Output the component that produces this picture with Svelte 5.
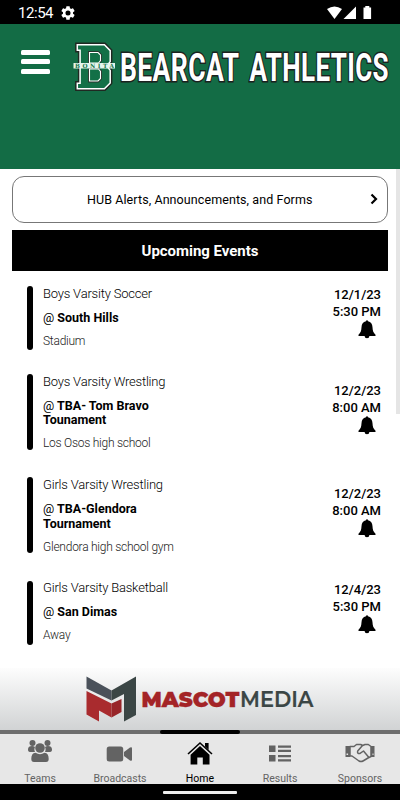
<script>
  const events = [
    { sport: 'Boys Varsity Soccer', opponent: ['South Hills'], venue: 'Stadium', date: '12/1/23', time: '5:30 PM' },
    { sport: 'Boys Varsity Wrestling', opponent: ['TBA- Tom Bravo', 'Tounament'], venue: 'Los Osos high school', date: '12/2/23', time: '8:00 AM' },
    { sport: 'Girls Varsity Wrestling', opponent: ['TBA-Glendora', 'Tournament'], venue: 'Glendora high school gym', date: '12/2/23', time: '8:00 AM' },
    { sport: 'Girls Varsity Basketball', opponent: ['San Dimas'], venue: 'Away', date: '12/4/23', time: '5:30 PM' }
  ];
  const tabs = ['Teams', 'Broadcasts', 'Home', 'Results', 'Sponsors'];
</script>

<div class="phone">
  <div class="status">
    <span class="clock">12:54</span>
    <svg class="gear" width="14" height="14" viewBox="2 2 20 20"><path fill="#fff" d="M19.14 12.94c.04-.3.06-.61.06-.94 0-.32-.02-.64-.07-.94l2.03-1.58a.49.49 0 0 0 .12-.61l-1.92-3.32a.49.49 0 0 0-.59-.22l-2.39.96c-.5-.38-1.03-.7-1.62-.94l-.36-2.54a.48.48 0 0 0-.48-.41h-3.84a.47.47 0 0 0-.47.41l-.36 2.54c-.59.24-1.13.57-1.62.94l-2.39-.96a.48.48 0 0 0-.59.22L2.74 8.87a.48.48 0 0 0 .12.61l2.03 1.58c-.05.3-.09.63-.09.94s.02.64.07.94l-2.03 1.58a.49.49 0 0 0-.12.61l1.92 3.32c.12.22.37.29.59.22l2.39-.96c.5.38 1.03.7 1.62.94l.36 2.54c.05.24.24.41.48.41h3.84c.24 0 .44-.17.47-.41l.36-2.54c.59-.24 1.13-.56 1.62-.94l2.39.96c.22.08.47 0 .59-.22l1.92-3.32a.48.48 0 0 0-.12-.61zM12 15.6a3.6 3.6 0 1 1 0-7.2 3.6 3.6 0 0 1 0 7.2z"/></svg>
    <svg class="signals" width="46" height="14" viewBox="0 0 46 14"><g fill="#fff"><path d="M0 3Q7.500-2 15 3L7.500 13Z"/><path d="M29 .5V13H16.500Z"/><path d="M38.300 1.500V0h4v1.500h1.800V13h-7.600V1.500Z"/></g></svg>
  </div>

  <header>
    <button class="menu" aria-label="Menu"><i></i><i></i><i></i></button>
    <svg class="banner" width="328" height="60" viewBox="72 36 328 60">
      <g stroke-linejoin="miter">
        <path d="M76 43.500H105l6.500 6.500v12l-3.500 4 3.500 4v13.500l-6.500 6.500H76v-8h2.800V51.500H76Z" fill="#137047" stroke="#202822" stroke-width="1.800"/>
        <path d="M77.300 44.800H104.400l5.800 5.800v11l-3.500 4.400 3.500 4.400v12.600l-5.800 5.700H77.300v-5.400h2.800V50.200h-2.800Z" fill="none" stroke="#fff" stroke-width="1.500"/>
        <path d="M89.500 52.500h8.500l2.500 2.500v5.500L98.500 63h-9ZM89.500 69H98.500l2 2.500v7L98 81h-8.500Z" fill="#137047" stroke="#28342d" stroke-width="3"/>
        <path d="M89.500 52.500h8.500l2.500 2.500v5.500L98.500 63h-9ZM89.500 69H98.500l2 2.500v7L98 81h-8.500Z" fill="#137047" stroke="#fff" stroke-width="1.100"/>
      </g>
      <path d="M73.500 63h41.500v5.500H73.500Z" fill="#e6f5ed"/>
      <text x="75" y="67.900" font-size="5.800" font-family="DejaVu Serif, serif" font-weight="700" fill="#17764b" textLength="39" lengthAdjust="spacing">BONITA</text>
      <text transform="translate(120 80.500) scale(.7 1)" class="title" font-size="38" textLength="170" lengthAdjust="spacing">BEARCAT</text>
      <text transform="translate(249.500 80.500) scale(.685 1)" class="title" font-size="38" textLength="203" lengthAdjust="spacing">ATHLETICS</text>
    </svg>
  </header>

  <main>
    <div class="alert">
      <span>HUB Alerts, Announcements, and Forms</span>
      <svg width="8" height="12" viewBox="0 0 8 12"><path d="m1.500 1.500 4.500 4.500-4.500 4.500" fill="none" stroke="#000" stroke-width="2.200"/></svg>
    </div>
    <h2>Upcoming Events</h2>
    <ul>
      {#each events as e}
        <li class:tall={e.opponent.length > 1}>
          <span class="bar"></span>
          <div class="info">
            <div class="sport">{e.sport}</div>
            <div class="opponent"><span>@</span> {#each e.opponent as line, i}{#if i}<br />{/if}{line}{/each}</div>
            <div class="venue">{e.venue}</div>
          </div>
          <div class="when">
            <div>{e.date}</div>
            <div>{e.time}</div>
            <svg width="18" height="19" viewBox="0 0 18 19"><path d="M8 1.300a1 1 0 0 1 2 0c3 .6 4.300 2.900 4.500 6 .2 3.400.6 5.200 3 7.400v1.300H.5v-1.300C2.900 12.500 3.300 10.700 3.500 7.300 3.700 4.200 5 1.900 8 1.300ZM6.600 16h4.800a2.400 2.300 0 0 1-4.800 0Z"/></svg>
          </div>
        </li>
      {/each}
    </ul>
    <div class="scroll"></div>
  </main>

  <div class="sponsor">
    <svg width="400" height="62" viewBox="0 668 400 62">
      <path d="M86.500 676.500 111.500 690.500V700.500L86.500 688.500Z" fill="#4a515a"/>
      <path d="M111.500 690.500 136 676.500V715L124 721.500V694L111.500 700.500Z" fill="#3b4645"/>
      <path d="M86.500 691 111.500 703.500V717.500L99 710.500V721.500L86.500 714.500Z" fill="#a92b2e"/>
      <path d="M111.500 703.500 121.500 699V712L111.500 717.500Z" fill="#982529"/>
      <g font-family="Montserrat, Lato, sans-serif"><text x="141.500" y="707" font-size="22" font-weight="900" fill="#a42427" stroke="#a42427" stroke-width=".3" textLength="98" lengthAdjust="spacingAndGlyphs">MASCOT</text><text x="240" y="707" font-size="22" font-weight="600" fill="#3b4645" stroke="#3b4645" stroke-width=".2" textLength="73.500" lengthAdjust="spacingAndGlyphs">MEDIA</text></g>
    </svg>
  </div>
  <div class="progress"><span></span></div>
  <nav>
    {#each tabs as tab}
      <div class="tab" class:active={tab === 'Home'}>
        <svg width="32" height="26" viewBox="0 0 32 26" fill="currentColor">
          {#if tab === 'Teams'}
            <circle cx="8.500" cy="4" r="3"/><circle cx="23.500" cy="4" r="3"/>
            <path d="M4 10.500c0-2.500 1.500-3.500 4-3.500 1.200 0 2.200.3 3 1-.8 1.600-.8 3.500 0 5H6c-1.500 0-2-1-2-2.500ZM28 10.500c0-2.500-1.500-3.500-4-3.500-1.200 0-2.200.3-3 1 .8 1.600.8 3.500 0 5h5c1.500 0 2-1 2-2.500Z"/>
            <circle cx="16" cy="9" r="4.800"/>
            <path d="M11.500 13.800c3 1.800 6 1.800 9 0 3 .3 4.200 2.500 4.200 6.200 0 2-.9 3-2.700 3H10c-1.800 0-2.700-1-2.700-3 0-3.700 1.200-5.900 4.200-6.200Z"/>
          {:else if tab === 'Broadcasts'}
            <rect x="2.700" y="7.500" width="16.500" height="15" rx="2.500"/><path d="M20 13 26 8.500q2-1 2 .8v11.400q0 1.800-2 .8l-6-4.500Z"/>
          {:else if tab === 'Home'}
            <path d="m4 15 12-11 12 11" fill="none" stroke="currentColor" stroke-width="1.600"/><path d="M21 4h3.600v7L21 7.500ZM16 7l9.500 8.700V25.500h-6.700v-7h-5.500v7H6.600v-9.800Z"/>
          {:else if tab === 'Results'}
            <path d="M5 6.500h6.500V13H5ZM5 16h6.500v6.500H5ZM14 6.500h13v2.300H14ZM14 10.700h13V13H14ZM14 16h13v2.300H14ZM14 20.200h13v2.300H14Z"/>
          {:else}
            <g fill="none" stroke="currentColor" stroke-width="1.500" stroke-linejoin="round" stroke-linecap="round"><path d="M6 7.500h4l2.500-2h4.200l2 1 2.300-1h3.300L27 7.500v10L24 19l-5 3q-2 1.200-4 0l-7-5H6ZM18.500 6.500 13.700 12q-.8 2.800 2 2.600l3.800-2.600 5 6"/></g>
            <path d="M1.500 7H6v11H1.500ZM27 7h3.500v11H27Z"/><path d="M2.500 14.500h1.600V16H2.500ZM28.500 14.500h1V16h-1Z" fill="#e7e7e7"/>
          {/if}
        </svg>
        <span>{tab}</span>
      </div>
    {/each}
  </nav>
  <div class="gesture"><i></i></div>
</div>

<style>
  :global(body) { margin: 0; }
  * { box-sizing: border-box; }
  .phone { width: 400px; height: 800px; background: #fff; font-family: Roboto, sans-serif; color: #000; display: flex; flex-direction: column; overflow: hidden; }
  .status { height: 24px; flex: none; background: #000; color: #fff; display: flex; align-items: center; padding: 1px 27px 0 18px; }
  .clock { font-size: 15px; letter-spacing: -.45px; width: 43px; line-height: 24px; }
  .signals { margin-left: auto; }
  header { height: 145px; flex: none; background: #136c45; display: flex; align-items: flex-start; padding: 12px 0 0 21px; }
  .menu { appearance: none; border: 0; padding: 0; background: none; width: 29px; margin-top: 13.500px; display: flex; flex-direction: column; gap: 4.500px; }
  .menu i { height: 5px; border-radius: 1.500px; background: #fff; }
  .banner { margin-left: 22px; flex: none; overflow: visible; }
  .title { font-family: Roboto, sans-serif; font-weight: 700; fill: #fff; stroke: #1b211e; stroke-width: 3px; paint-order: stroke; }
  main { height: 499px; flex: none; position: relative; padding: 7px 12px 0; }
  .alert { height: 47px; border: 1px solid #777; border-radius: 12px; display: flex; align-items: center; padding: 0 9px 0 74px; font-size: 12.500px; letter-spacing: .085px; }
  .alert svg { margin-left: auto; margin-top: -1px; }
  h2 { margin: 7px 0 0; height: 41px; line-height: 42px; background: #000; color: #fff; text-align: center; font-size: 15px; font-weight: 700; letter-spacing: -.03px; }
  ul { margin: 15px 0 0; padding: 0 7px 0 15px; list-style: none; display: flex; flex-direction: column; gap: 24px; }
  li { height: 64px; display: flex; }
  li.tall { height: 79.300px; }
  .bar { width: 6px; height: 64px; border-radius: 3px; background: #000; }
  .tall .bar { height: 76px; }
  .info { margin-left: 10px; flex: 1; }
  .sport { font-size: 13px; line-height: 15px; font-weight: 300; letter-spacing: -.2px; margin-top: -.4px; }
  .opponent { font-size: 12.500px; line-height: 14.500px; margin-top: 10.200px; font-weight: 700; }
  .opponent span { font-weight: 400; }
  .venue { font-size: 12px; line-height: 14px; font-weight: 300; margin-top: 8.600px; letter-spacing: -.25px; color: #222; }
  .when { text-align: right; font-weight: 500; font-size: 13px; line-height: 17px; padding-top: .4px; }
  .tall .when { padding-top: 8px; }
  .when svg { display: block; margin: -.4px 5px 0 auto; }
  .scroll { position: absolute; right: 0; top: 0; width: 4px; height: 245px; background: #e5e5e5; }
  .sponsor { height: 62px; flex: none; background: linear-gradient(#fdfdfd, #d1d3d4); }
  .sponsor svg { display: block; }
  .progress { height: 4px; flex: none; background: #6e6e6e; display: flex; justify-content: center; }
  .progress span { width: 80px; background: #000; border-radius: 2px; }
  nav { height: 50px; flex: none; background: #e7e7e7; display: flex; }
  .tab { width: 80px; padding-top: 5px; display: flex; flex-direction: column; align-items: center; color: #636363; font-size: 10.500px; }
  .tab span { margin-top: 5px; line-height: 18px; height: 14px; }
  .tab.active { color: #000; }
  .gesture { height: 16px; flex: none; background: #000; display: flex; justify-content: center; padding-top: 7px; }
  .gesture i { width: 74px; height: 3px; border-radius: 1px; background: #eee; }
</style>
